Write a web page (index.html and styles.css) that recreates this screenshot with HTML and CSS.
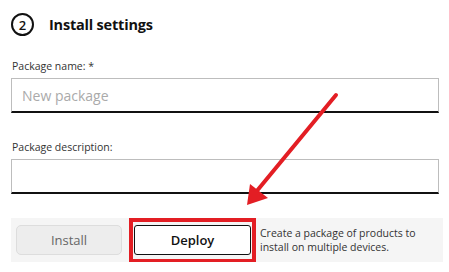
FILE: index.html
```html
<!DOCTYPE html>
<html lang="en">
<head>
    <meta charset="UTF-8">
    <meta name="viewport" content="width=device-width, initial-scale=1.0">
    <title>Install settings</title>
    <link rel="stylesheet" href="styles.css">
</head>
<body>
    <div class="panel">
        <div class="step-header">
            <div class="step-num">2</div>
            <h2>Install settings</h2>
        </div>

        <label class="field-label">Package name: *</label>
        <div class="field">New package</div>

        <label class="field-label desc-label">Package description:</label>
        <div class="field"></div>

        <div class="mode-bar">
            <button class="btn btn-install">Install</button>
            <div class="highlight">
                <button class="btn btn-deploy">Deploy</button>
            </div>
            <p class="mode-help">Create a package of products to<br>install on multiple devices.</p>
        </div>
    </div>

    <!-- annotation arrow -->
    <svg class="arrow" width="449" height="272" viewBox="0 0 449 272">
        <line x1="336" y1="95" x2="256" y2="192" stroke="#e31e24" stroke-width="4" stroke-linecap="round"/>
        <polygon points="247,205 250,184 268,198" fill="#e31e24"/>
    </svg>
</body>
</html>
```

FILE: styles.css
```css
* {
    box-sizing: border-box;
}

html, body {
    margin: 0;
    padding: 0;
    background: #fff;
    font-family: 'Open Sans', sans-serif;
    color: #222;
}

.panel {
    padding: 13px 10px 0 11px;
    width: 449px;
}

/* HEADER */
.step-header {
    display: flex;
    align-items: center;
    gap: 15px;
}

.step-num {
    width: 23px;
    height: 23px;
    border: 2px solid #111;
    border-radius: 50%;
    display: flex;
    align-items: center;
    justify-content: center;
    font-size: 13px;
    font-weight: 600;
    color: #111;
}

h2 {
    margin: 0;
    font-size: 14.5px;
    font-weight: 700;
    color: #111;
    letter-spacing: -0.2px;
}

/* FIELDS */
.field-label {
    display: block;
    font-size: 10.5px;
    color: #333;
    margin-top: 23px;
    margin-bottom: 4px;
    padding-left: 1px;
    line-height: 15px;
}

.desc-label {
    margin-top: 27px;
}

.field {
    width: 428px;
    height: 35px;
    border: 1px solid #bdbdbd;
    border-bottom: 2px solid #111;
    padding: 6px 10px;
    font-size: 14px;
    color: #aaa;
    line-height: 21px;
}

/* MODE BAR */
.mode-bar {
    margin-top: 24px;
    width: 432px;
    height: 44px;
    background: #f5f5f5;
    display: flex;
    align-items: center;
    padding-left: 5px;
}

.btn {
    font-family: 'Open Sans', sans-serif;
    font-size: 13px;
    height: 30px;
    cursor: pointer;
}

.btn-install {
    width: 106px;
    background: #ededed;
    border: 1px solid #ddd;
    border-radius: 5px;
    color: #666;
}

.highlight {
    margin-left: 7px;
    border: 4px solid #e31e24;
    height: 45px;
    width: 127px;
    display: flex;
    align-items: center;
    padding-left: 1px;
}

.btn-deploy {
    width: 117px;
    background: #fff;
    border: 1px solid #111;
    border-radius: 3px;
    color: #111;
    font-weight: 600;
}

.mode-help {
    margin: 0 0 0 4px;
    font-size: 10.5px;
    line-height: 14px;
    color: #333;
}

.arrow {
    position: absolute;
    top: 0;
    left: 0;
    pointer-events: none;
}
```
